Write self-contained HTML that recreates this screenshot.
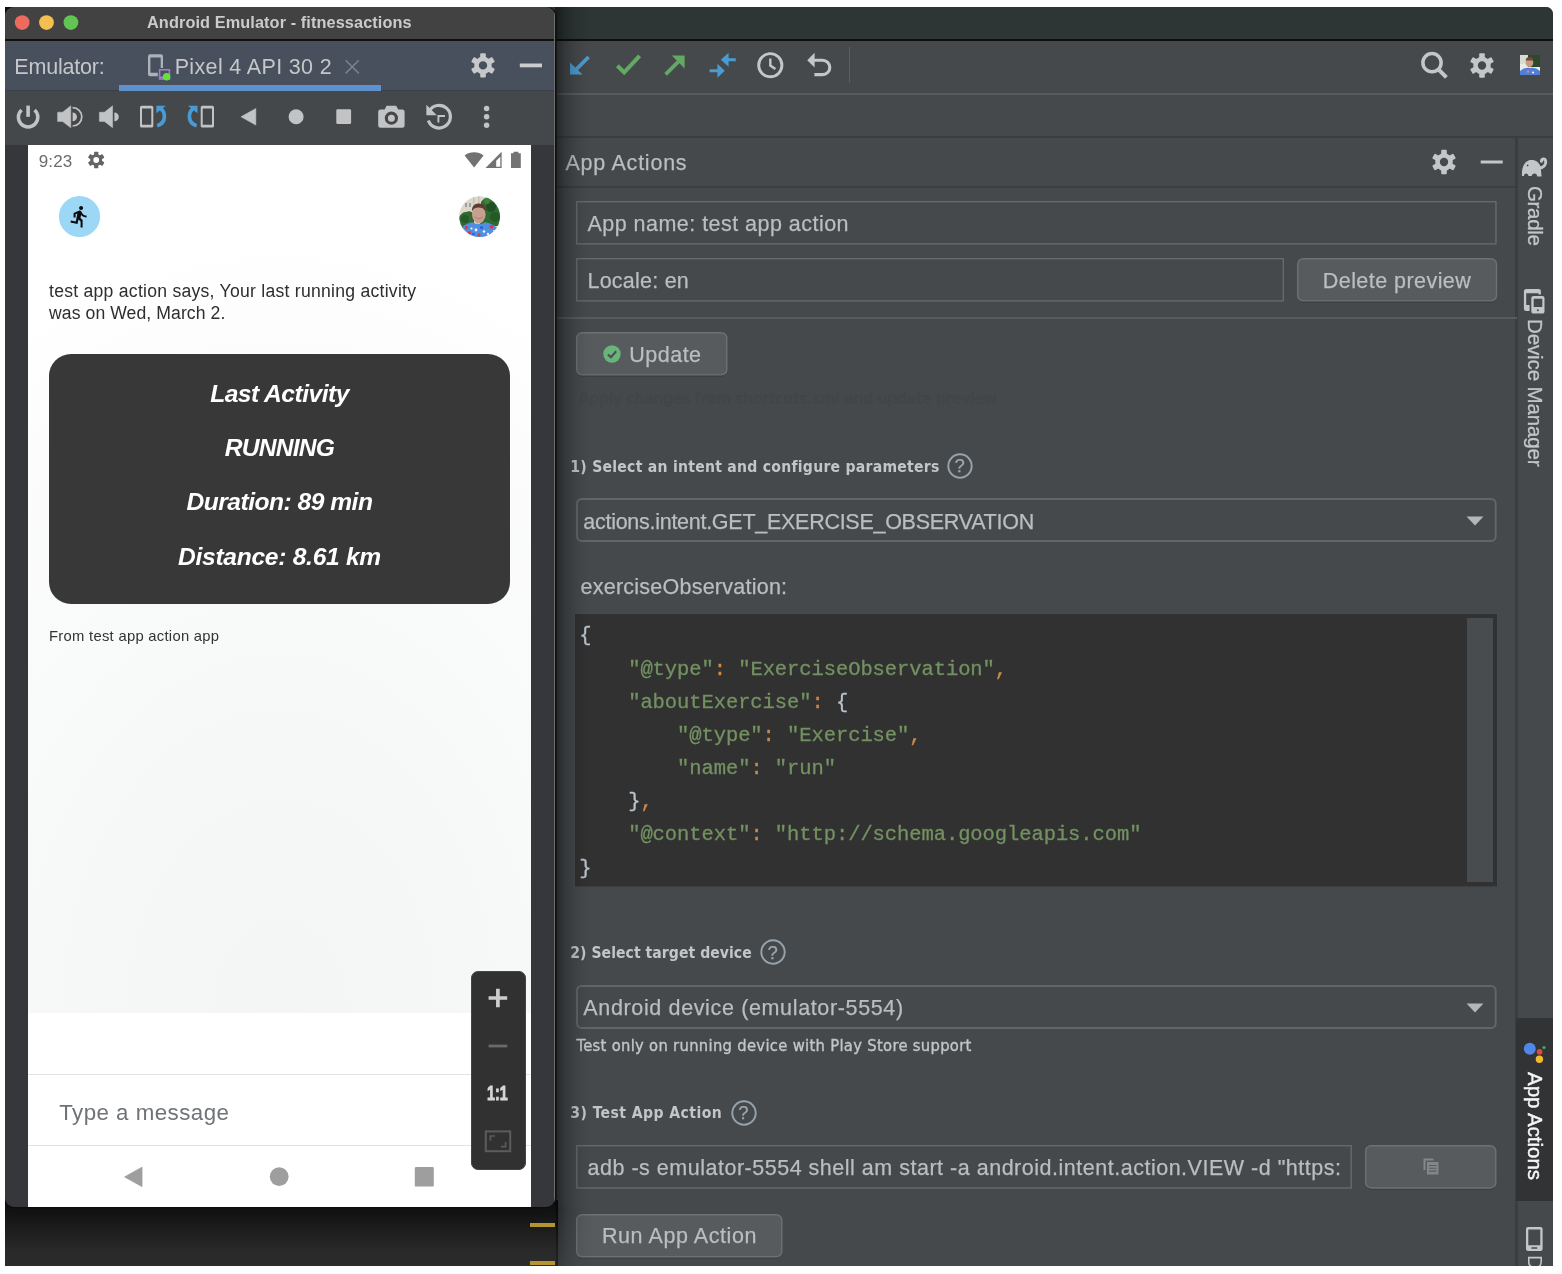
<!DOCTYPE html>
<html lang="en"><head><meta charset="utf-8"><title>App Actions</title><style>
html,body{margin:0;padding:0;background:#fff;}
body{width:1562px;height:1274px;position:relative;overflow:hidden;font-family:"Liberation Sans",sans-serif;}
.a{position:absolute;box-sizing:border-box;}
.t{position:absolute;white-space:pre;line-height:1;}
svg{overflow:visible;}
</style></head><body>
<div class="a" id="root" style="left:0;top:0;width:1562px;height:1274px;clip-path:inset(6.7px 9px 8.4px 5px);will-change:transform;">
<div class="a" style="left:5px;top:7px;width:1548px;height:1259px;background:#45494b;border-radius:0 7px 0 0;overflow:hidden;"></div>
<div class="a" style="left:5px;top:7px;width:1548px;height:33px;background:#2d3535;border-radius:0 7px 0 0;"></div>
<div class="a" style="left:5px;top:7px;width:20px;height:20px;background:#0c0c0c;"></div>
<div class="a" style="left:5px;top:39px;width:1548px;height:2px;background:#0d0e0e;"></div>
<div class="a" style="left:556px;top:93px;width:997px;height:2px;background:#595c5e;"></div>
<div class="a" style="left:556px;top:136px;width:997px;height:2px;background:#3a3d3f;"></div>
<div class="a" style="left:556px;top:186px;width:961px;height:2px;background:#3b3e40;"></div>
<div class="a" style="left:1515.4px;top:138px;width:2.4px;height:1128px;background:#3b3e40;"></div>
<div class="a" style="left:1515.6px;top:1017.8px;width:37.6px;height:183.2px;background:#313335;"></div>
<div class="a" style="left:5px;top:1200px;width:552.6px;height:66px;background:linear-gradient(#0e0e0e 0px,#101010 8px,#1d1d1d 30px,#2a2a2a 52px,#2b2b2b 66px);"></div>
<div class="a" style="left:529.6px;top:1223.1px;width:25.8px;height:3.9px;background:#b6942f;"></div>
<div class="a" style="left:529.6px;top:1261.2px;width:25.8px;height:3.9px;background:#b6942f;"></div>
<svg class="a" style="left:0px;top:0px;" width="1562" height="140" viewBox="0 0 1562 140"><path d="M588.6,57L574,71.6" stroke="#4a9bd0" stroke-width="3.7" fill="none"/><path d="M570,62.4V74.6H582.6Z" fill="#4a9bd0"/><path d="M617.4,65.8L624.2,72.4L639.6,55.8" fill="none" stroke="#62a964" stroke-width="4.1"/><path d="M665.6,74.4L680.4,59.6" stroke="#62a964" stroke-width="3.7" fill="none"/><path d="M671.8,55.6H684.6V68.4Z" fill="#62a964"/><path d="M720.8,59.8L728.6,52.8V58.3H735.8V61.3H728.6V66.8Z" fill="#4a9bd0"/><path d="M724.8,70.8L717.4,63.8V69.3H709.6V72.3H717.4V77.8Z" fill="#4a9bd0"/><circle cx="770.3" cy="65.2" r="11.6" fill="none" stroke="#c4c6c8" stroke-width="2.9"/><path d="M770.3,58.6V65.6L775.4,69" fill="none" stroke="#c4c6c8" stroke-width="2.4"/><path d="M807.2,60.2L814.6,52.8V67.6Z" fill="#c4c6c8"/><path d="M814,60.2H822.6a7.2,7.2 0 0 1 0,14.4H814.4" fill="none" stroke="#c4c6c8" stroke-width="3.1"/><rect x="849" y="47" width="1" height="36" fill="#5b5e60"/><circle cx="1432" cy="62.700" r="9.1" fill="none" stroke="#c4c6c8" stroke-width="3.5"/><path d="M1438.400,69.400L1446.400,77.400" stroke="#c4c6c8" stroke-width="4" fill="none"/><g transform="translate(1482,65.5) rotate(0)" fill="#c4c6c8"><path fill-rule="evenodd" d="M8.783999999999999,0A8.783999999999999,8.783999999999999 0 1 0 -8.783999999999999,0A8.783999999999999,8.783999999999999 0 1 0 8.783999999999999,0Z M4.2,0A4.2,4.2 0 1 1 -4.2,0A4.2,4.2 0 1 1 4.2,0Z"/><rect x="-2.81" y="-12.20" width="5.61" height="5.49" rx="0.98" transform="rotate(0.0)"/><rect x="-2.81" y="-12.20" width="5.61" height="5.49" rx="0.98" transform="rotate(60.0)"/><rect x="-2.81" y="-12.20" width="5.61" height="5.49" rx="0.98" transform="rotate(120.0)"/><rect x="-2.81" y="-12.20" width="5.61" height="5.49" rx="0.98" transform="rotate(180.0)"/><rect x="-2.81" y="-12.20" width="5.61" height="5.49" rx="0.98" transform="rotate(240.0)"/><rect x="-2.81" y="-12.20" width="5.61" height="5.49" rx="0.98" transform="rotate(300.0)"/></g></svg>
<svg class="a" style="left:1520px;top:55.3px;" width="20" height="20" viewBox="0 0 20 20"><rect x="0" y="0" width="20" height="20" fill="#e9ece6"/><rect x="8" y="0" width="12" height="12" fill="#2c4a2a"/><rect x="0" y="0" width="8" height="9" fill="#d9dcd3"/><ellipse cx="9.5" cy="7.5" rx="3.8" ry="4.6" fill="#c99a84"/><path d="M5.7,5.5a3.8,3.6 0 0 1 7.6,0z" fill="#6d4a3a"/><path d="M0,20V16Q5,11.5 10,13Q15,11.5 20,16V20Z" fill="#4f7fd6"/><circle cx="8" cy="16.5" r="1.3" fill="#e07a8a"/><circle cx="13" cy="17.5" r="1.1" fill="#f2f2f8"/></svg>
<div class="t" style="left:565.40px;top:153px;font:normal 400 21.5px/1 'Liberation Sans',sans-serif;color:#bbbdbf;letter-spacing:0.768px;-webkit-text-stroke:0.25px #bbbdbf;">App Actions</div>
<svg class="a" style="left:0px;top:0px;" width="1562" height="200" viewBox="0 0 1562 200"><g transform="translate(1444,162) rotate(0)" fill="#c4c6c8"><path fill-rule="evenodd" d="M8.783999999999999,0A8.783999999999999,8.783999999999999 0 1 0 -8.783999999999999,0A8.783999999999999,8.783999999999999 0 1 0 8.783999999999999,0Z M4.2,0A4.2,4.2 0 1 1 -4.2,0A4.2,4.2 0 1 1 4.2,0Z"/><rect x="-2.81" y="-12.20" width="5.61" height="5.49" rx="0.98" transform="rotate(0.0)"/><rect x="-2.81" y="-12.20" width="5.61" height="5.49" rx="0.98" transform="rotate(60.0)"/><rect x="-2.81" y="-12.20" width="5.61" height="5.49" rx="0.98" transform="rotate(120.0)"/><rect x="-2.81" y="-12.20" width="5.61" height="5.49" rx="0.98" transform="rotate(180.0)"/><rect x="-2.81" y="-12.20" width="5.61" height="5.49" rx="0.98" transform="rotate(240.0)"/><rect x="-2.81" y="-12.20" width="5.61" height="5.49" rx="0.98" transform="rotate(300.0)"/></g><rect x="1480.7" y="160.5" width="22" height="3" fill="#c4c6c8"/></svg>
<svg class="a" style="left:576px;top:201px;" width="920.7" height="46.6" viewBox="0 0 920.7 46.6"><rect x="0.7" y="0.7" width="919.3000000000001" height="42.2" rx="0" fill="none" stroke="#666a6c" stroke-width="1.4"/></svg>
<div class="t" style="left:587.50px;top:214px;font:normal 400 21.5px/1 'Liberation Sans',sans-serif;color:#bbbdbf;letter-spacing:0.468px;-webkit-text-stroke:0.25px #bbbdbf;">App name: test app action</div>
<svg class="a" style="left:576px;top:257.5px;" width="708" height="46.6" viewBox="0 0 708 46.6"><rect x="0.7" y="0.7" width="706.6" height="42.2" rx="0" fill="none" stroke="#666a6c" stroke-width="1.4"/></svg>
<div class="t" style="left:587.50px;top:271px;font:normal 400 21.5px/1 'Liberation Sans',sans-serif;color:#bbbdbf;letter-spacing:0.228px;-webkit-text-stroke:0.25px #bbbdbf;">Locale: en</div>
<svg class="a" style="left:1296.5px;top:257.5px;" width="200.2" height="46.6" viewBox="0 0 200.2 46.6"><rect x="1.2" y="2.5" width="197.79999999999998" height="42.2" rx="5.5" fill="rgba(0,0,0,0.16)"/><rect x="0.7" y="0.7" width="198.79999999999998" height="42.2" rx="5.5" fill="#575b5d" stroke="#6d7173" stroke-width="1.4"/></svg>
<div class="t" style="left:1322.75px;top:271px;font:normal 400 21.5px/1 'Liberation Sans',sans-serif;color:#bbbdbf;letter-spacing:0.449px;-webkit-text-stroke:0.25px #bbbdbf;">Delete preview</div>
<div class="a" style="left:556px;top:316.5px;width:961px;height:2px;background:#585b5d;"></div>
<svg class="a" style="left:576px;top:332px;" width="151.5" height="46.6" viewBox="0 0 151.5 46.6"><rect x="1.2" y="2.5" width="149.1" height="42.2" rx="5.5" fill="rgba(0,0,0,0.16)"/><rect x="0.7" y="0.7" width="150.1" height="42.2" rx="5.5" fill="#575b5d" stroke="#6d7173" stroke-width="1.4"/></svg>
<svg class="a" style="left:602.7px;top:345.2px;" width="18" height="18" viewBox="0 0 18 18"><circle cx="9" cy="9" r="8.7" fill="#68b579"/><path d="M4.9,9.4L7.9,12.2L13.2,6.3" fill="none" stroke="#4b4f51" stroke-width="2.1"/></svg>
<div class="t" style="left:629.20px;top:345px;font:normal 400 21.5px/1 'Liberation Sans',sans-serif;color:#bbbdbf;letter-spacing:0.512px;-webkit-text-stroke:0.25px #bbbdbf;">Update</div>
<div class="t" style="left:578.50px;top:391px;font:normal 700 16px/1 'DejaVu Sans Condensed','DejaVu Sans',sans-serif;color:#424648;letter-spacing:-0.537px;">Apply changes from shortcuts.xml and update preview</div>
<div class="t" style="left:570.30px;top:460px;font:normal 700 15.6px/1 'DejaVu Sans Condensed','DejaVu Sans',sans-serif;color:#c3c5c7;letter-spacing:0.259px;">1) Select an intent and configure parameters</div>
<svg class="a" style="left:946.7px;top:452.5px;" width="26" height="26" viewBox="0 0 26 26"><circle cx="13" cy="13" r="11.7" fill="none" stroke="#98a2ab" stroke-width="1.9"/></svg>
<div class="t" style="left:954.56px;top:457px;font:normal 400 18.5px/1 'Liberation Sans',sans-serif;color:#9ea8b0;-webkit-text-stroke:0.25px #9ea8b0;">?</div>
<svg class="a" style="left:576px;top:498px;" width="920.7" height="46.9" viewBox="0 0 920.7 46.9"><rect x="0.95" y="0.95" width="918.8000000000001" height="42.0" rx="4.5" fill="none" stroke="#62666a" stroke-width="1.9"/></svg>
<div class="t" style="left:583.30px;top:512px;font:normal 400 21.5px/1 'Liberation Sans',sans-serif;color:#bbbdbf;letter-spacing:-0.273px;-webkit-text-stroke:0.25px #bbbdbf;">actions.intent.GET_EXERCISE_OBSERVATION</div>
<svg class="a" style="left:1465.7px;top:515.95px;" width="18" height="10" viewBox="0 0 18 10"><path d="M0.5,0.5H17.5L9,9.5Z" fill="#b4b6b8"/></svg>
<div class="t" style="left:580.50px;top:577px;font:normal 400 21.5px/1 'Liberation Sans',sans-serif;color:#bbbdbf;letter-spacing:0.242px;-webkit-text-stroke:0.25px #bbbdbf;">exerciseObservation:</div>
<div class="a" style="left:574.6px;top:612.5px;width:923.8px;height:274.8px;background:#313131;border:1px solid #484a4b;border-left:none;border-bottom-color:#3c3e3f;"></div>
<div class="a" style="left:1467.2px;top:618px;width:26px;height:263.5px;background:#484c4e;"></div>
<div class="t" style="left:579.30px;top:626px;font:normal 400 20.5px/1 'Liberation Mono',monospace;color:#b9c3cd;-webkit-text-stroke:0.3px;"><span style="color:#b9c3cd">{</span></div>
<div class="t" style="left:628.18px;top:660px;font:normal 400 20.5px/1 'Liberation Mono',monospace;color:#b9c3cd;letter-spacing:-0.082px;-webkit-text-stroke:0.3px;"><span style="color:#739161">&quot;@type&quot;</span><span style="color:#cc8a4a">:</span> <span style="color:#739161">&quot;ExerciseObservation&quot;</span><span style="color:#cc8a4a">,</span></div>
<div class="t" style="left:628.18px;top:693px;font:normal 400 20.5px/1 'Liberation Mono',monospace;color:#b9c3cd;letter-spacing:-0.082px;-webkit-text-stroke:0.3px;"><span style="color:#739161">&quot;aboutExercise&quot;</span><span style="color:#cc8a4a">:</span> <span style="color:#b9c3cd">{</span></div>
<div class="t" style="left:677.06px;top:726px;font:normal 400 20.5px/1 'Liberation Mono',monospace;color:#b9c3cd;letter-spacing:-0.082px;-webkit-text-stroke:0.3px;"><span style="color:#739161">&quot;@type&quot;</span><span style="color:#cc8a4a">:</span> <span style="color:#739161">&quot;Exercise&quot;</span><span style="color:#cc8a4a">,</span></div>
<div class="t" style="left:677.06px;top:759px;font:normal 400 20.5px/1 'Liberation Mono',monospace;color:#b9c3cd;letter-spacing:-0.082px;-webkit-text-stroke:0.3px;"><span style="color:#739161">&quot;name&quot;</span><span style="color:#cc8a4a">:</span> <span style="color:#739161">&quot;run&quot;</span></div>
<div class="t" style="left:628.18px;top:792px;font:normal 400 20.5px/1 'Liberation Mono',monospace;color:#b9c3cd;letter-spacing:-0.082px;-webkit-text-stroke:0.3px;"><span style="color:#b9c3cd">}</span><span style="color:#cc8a4a">,</span></div>
<div class="t" style="left:628.18px;top:825px;font:normal 400 20.5px/1 'Liberation Mono',monospace;color:#b9c3cd;letter-spacing:-0.082px;-webkit-text-stroke:0.3px;"><span style="color:#739161">&quot;@context&quot;</span><span style="color:#cc8a4a">:</span> <span style="color:#739161">&quot;http://schema.googleapis.com&quot;</span></div>
<div class="t" style="left:579.30px;top:859px;font:normal 400 20.5px/1 'Liberation Mono',monospace;color:#b9c3cd;-webkit-text-stroke:0.3px;"><span style="color:#b9c3cd">}</span></div>
<div class="t" style="left:570.30px;top:946px;font:normal 700 15.6px/1 'DejaVu Sans Condensed','DejaVu Sans',sans-serif;color:#c3c5c7;letter-spacing:0.041px;">2) Select target device</div>
<svg class="a" style="left:759.6px;top:939.3px;" width="26" height="26" viewBox="0 0 26 26"><circle cx="13" cy="13" r="11.7" fill="none" stroke="#98a2ab" stroke-width="1.9"/></svg>
<div class="t" style="left:767.46px;top:944px;font:normal 400 18.5px/1 'Liberation Sans',sans-serif;color:#9ea8b0;-webkit-text-stroke:0.25px #9ea8b0;">?</div>
<svg class="a" style="left:576px;top:985px;" width="920.7" height="46.9" viewBox="0 0 920.7 46.9"><rect x="0.95" y="0.95" width="918.8000000000001" height="42.0" rx="4.5" fill="none" stroke="#62666a" stroke-width="1.9"/></svg>
<div class="t" style="left:583.30px;top:998px;font:normal 400 21.5px/1 'Liberation Sans',sans-serif;color:#bbbdbf;letter-spacing:0.644px;-webkit-text-stroke:0.25px #bbbdbf;">Android device (emulator-5554)</div>
<svg class="a" style="left:1465.7px;top:1002.95px;" width="18" height="10" viewBox="0 0 18 10"><path d="M0.5,0.5H17.5L9,9.5Z" fill="#b4b6b8"/></svg>
<div class="t" style="left:576.60px;top:1038px;font:normal 400 16.4px/1 'DejaVu Sans Condensed','DejaVu Sans',sans-serif;color:#c3c5c7;letter-spacing:0.321px;-webkit-text-stroke:0.35px #c3c5c7;">Test only on running device with Play Store support</div>
<div class="t" style="left:570.30px;top:1106px;font:normal 700 15.6px/1 'DejaVu Sans Condensed','DejaVu Sans',sans-serif;color:#c3c5c7;letter-spacing:0.433px;">3) Test App Action</div>
<svg class="a" style="left:730.5px;top:1099.5px;" width="26" height="26" viewBox="0 0 26 26"><circle cx="13" cy="13" r="11.7" fill="none" stroke="#98a2ab" stroke-width="1.9"/></svg>
<div class="t" style="left:738.36px;top:1104px;font:normal 400 18.5px/1 'Liberation Sans',sans-serif;color:#9ea8b0;-webkit-text-stroke:0.25px #9ea8b0;">?</div>
<svg class="a" style="left:576px;top:1145.4px;" width="776" height="46.7" viewBox="0 0 776 46.7"><rect x="0.7" y="0.7" width="774.6" height="42.300000000000004" rx="0" fill="none" stroke="#666a6c" stroke-width="1.4"/></svg>
<div class="t" style="left:587.50px;top:1158px;font:normal 400 21.5px/1 'Liberation Sans',sans-serif;color:#bbbdbf;letter-spacing:0.512px;-webkit-text-stroke:0.25px #bbbdbf;">adb -s emulator-5554 shell am start -a android.intent.action.VIEW -d &quot;https:</div>
<svg class="a" style="left:1365px;top:1145.4px;" width="131.5" height="46.7" viewBox="0 0 131.5 46.7"><rect x="1.2" y="2.5" width="129.1" height="42.300000000000004" rx="5.5" fill="rgba(0,0,0,0.16)"/><rect x="0.7" y="0.7" width="130.1" height="42.300000000000004" rx="5.5" fill="#575b5d" stroke="#6d7173" stroke-width="1.4"/></svg>
<svg class="a" style="left:1423px;top:1158px;" width="15.4" height="17" viewBox="0 0 15.4 17"><path d="M0.5,0.5H10.5V2.5H2.5V12H0.5Z" fill="#84878a"/><rect x="4" y="4" width="11.5" height="12.5" fill="#84878a"/><path d="M6,7.5H13.5M6,10.3H13.5M6,13.1H13.5" stroke="#585c5e" stroke-width="1.1"/></svg>
<svg class="a" style="left:576px;top:1214px;" width="206.5" height="46.5" viewBox="0 0 206.5 46.5"><rect x="1.2" y="2.5" width="204.1" height="42.1" rx="5.5" fill="rgba(0,0,0,0.16)"/><rect x="0.7" y="0.7" width="205.1" height="42.1" rx="5.5" fill="#575b5d" stroke="#6d7173" stroke-width="1.4"/></svg>
<div class="t" style="left:602.00px;top:1226px;font:normal 400 21.5px/1 'Liberation Sans',sans-serif;color:#bbbdbf;letter-spacing:0.569px;-webkit-text-stroke:0.25px #bbbdbf;">Run App Action</div>
<div class="t" style="left:1534.5px;top:186px;transform-origin:0 0;transform:rotate(90deg) translate(0,-50%);font:normal 400 20.5px/1 'Liberation Sans',sans-serif;color:#c3c5c7;letter-spacing:-0.339px;-webkit-text-stroke:0.3px #c3c5c7;">Gradle</div>
<div class="t" style="left:1534.5px;top:319px;transform-origin:0 0;transform:rotate(90deg) translate(0,-50%);font:normal 400 20.5px/1 'Liberation Sans',sans-serif;color:#c3c5c7;letter-spacing:-0.126px;-webkit-text-stroke:0.3px #c3c5c7;">Device Manager</div>
<div class="t" style="left:1534.5px;top:1255.4px;transform-origin:0 0;transform:rotate(90deg) translate(0,-50%);font:normal 400 20.5px/1 'Liberation Sans',sans-serif;color:#c3c5c7;letter-spacing:-0.005px;">D</div>
<div class="t" style="left:1535.3px;top:1071.5px;transform-origin:0 0;transform:rotate(90deg) translate(0,-50%);font:normal 400 20.5px/1 'Liberation Sans',sans-serif;color:#f4f5f6;letter-spacing:-0.024px;-webkit-text-stroke:0.45px #f4f5f6;">App Actions</div>
<svg class="a" style="left:0px;top:0px;pointer-events:none;" width="1562" height="1274" viewBox="0 0 1562 1274"><path d="M1522,175.9C1521.4,166 1525.4,160 1531.6,160C1536,160 1539.2,162.6 1540.6,166.600L1541.6,176.400L1537.200,176.400C1537.200,174.600 1536,173.500 1534.500,173.500C1533,173.500 1531.900,174.600 1531.700,176.100L1528.500,176.100C1528.300,174.600 1527.400,173.600 1526.100,173.600C1524.800,173.600 1524,174.600 1523.900,175.900Z" fill="#c4c6c8"/><path d="M1538,168.200C1543.800,168.400 1546.200,164.600 1545.700,161.300C1545.200,158.200 1541.600,158.400 1541.400,161.400" fill="none" stroke="#c4c6c8" stroke-width="2.9" stroke-linecap="round"/><circle cx="1527.6" cy="165.4" r="0.9" fill="#45494b"/><path d="M1529.600,311H1526.400a2.500,2.500 0 0 1 -2.500,-2.500V291.500a2.500,2.500 0 0 1 2.500,-2.500H1538.400a2.500,2.500 0 0 1 2.500,2.500V294.600H1538.600V293.300H1526.200V305H1529.600Z" fill="#c4c6c8"/><path fill-rule="evenodd" d="M1533.500,296.100H1542.300a2.200,2.200 0 0 1 2.200,2.200V311.400a2.200,2.200 0 0 1 -2.200,2.200H1533.500a2.200,2.200 0 0 1 -2.200,-2.200V298.300a2.200,2.200 0 0 1 2.200,-2.200Z M1533.700,298.800V307.100H1542.300V298.800Z" fill="#c4c6c8"/><circle cx="1537.9" cy="310.3" r="1" fill="#45494b"/><circle cx="1529.8" cy="1048.8" r="6" fill="#4f87e8"/><circle cx="1539.6" cy="1051.8" r="2.9" fill="#e0483c"/><circle cx="1539.4" cy="1059.2" r="3.7" fill="#f2bb2e"/><circle cx="1544" cy="1047.6" r="1.7" fill="#3ea655"/><path fill-rule="evenodd" d="M1528,1227H1540.600a2,2 0 0 1 2,2V1248.900a2,2 0 0 1 -2,2H1528a2,2 0 0 1 -2,-2V1229a2,2 0 0 1 2,-2Z M1528.300,1229.600V1245.300H1540.300V1229.600Z M1531.400,1247.300V1248.700H1537.200V1247.300Z" fill="#c4c6c8"/></svg>
<div class="a" style="left:555px;top:7px;width:36px;height:1200px;background:linear-gradient(to right,rgba(0,0,0,0.5) 0px,rgba(0,0,0,0.42) 3px,rgba(0,0,0,0.24) 10px,rgba(0,0,0,0.1) 20px,rgba(0,0,0,0.03) 29px,rgba(0,0,0,0) 36px);"></div>
<div class="a" style="left:555.6px;top:1207px;width:36px;height:59px;background:linear-gradient(to right,rgba(0,0,0,0.5) 0px,rgba(0,0,0,0.42) 3px,rgba(0,0,0,0.24) 10px,rgba(0,0,0,0.1) 20px,rgba(0,0,0,0.03) 29px,rgba(0,0,0,0) 36px);-webkit-mask-image:linear-gradient(to bottom,rgba(0,0,0,1),rgba(0,0,0,0.45));mask-image:linear-gradient(to bottom,rgba(0,0,0,1),rgba(0,0,0,0.45));"></div>
<div class="a" style="left:5px;top:7px;width:550.3px;height:1200.3px;background:#36373a;border-radius:9px;box-shadow:1.7px 0 0 0 #111,0 1.2px 0 0 #0c0c0c;overflow:hidden;"><div class="a" style="left:0px;top:0px;width:551px;height:33px;background:#424242;"></div>
<div class="a" style="left:0px;top:32.3px;width:551px;height:1.6px;background:#111;"></div>
<div class="a" style="left:0px;top:33.8px;width:551px;height:49.1px;background:#47505c;"></div>
<div class="a" style="left:0px;top:82.9px;width:551px;height:1.3px;background:#3a3f45;"></div>
<div class="a" style="left:113.5px;top:77.9px;width:262px;height:6.1px;background:#5f92cd;"></div>
<div class="a" style="left:0px;top:84.1px;width:551px;height:53.5px;background:#45484a;"></div>
<div class="a" style="left:549.3px;top:6px;width:1px;height:1190px;background:#6c6e70;"></div>
</div>
<svg class="a" style="left:0px;top:0px;" width="100" height="40" viewBox="0 0 100 40"><circle cx="22.2" cy="22.6" r="7.4" fill="#ee6a5f"/><circle cx="46.5" cy="22.6" r="7.4" fill="#f5bf4f"/><circle cx="70.9" cy="22.6" r="7.4" fill="#61c554"/></svg>
<div class="t" style="left:147.00px;top:14px;font:normal 700 16.3px/1 'Liberation Sans',sans-serif;color:#cbcbcb;letter-spacing:0.099px;">Android Emulator - fitnessactions</div>
<div class="t" style="left:14.30px;top:57px;font:normal 400 21.5px/1 'Liberation Sans',sans-serif;color:#c5c7c9;letter-spacing:-0.201px;">Emulator:</div>
<div class="t" style="left:174.70px;top:57px;font:normal 400 21.5px/1 'Liberation Sans',sans-serif;color:#c5c7c9;letter-spacing:0.344px;">Pixel 4 API 30 2</div>
<svg class="a" style="left:0px;top:0px;" width="560" height="140" viewBox="0 0 560 140"><path fill-rule="evenodd" d="M150,54.200H161a2,2 0 0 1 2,2V74.300a2,2 0 0 1 -2,2H150a2,2 0 0 1 -2,-2V56.200a2,2 0 0 1 2,-2Z M150.400,57.400V72.800H160.700V57.400Z" fill="#aab2ba"/><rect x="157.800" y="68" width="13.400" height="12.600" fill="#47505c"/><rect x="159.600" y="69.800" width="9.800" height="9.200" fill="none" stroke="#a07cc2" stroke-width="1.600"/><rect x="160" y="76.400" width="9" height="2.400" fill="#a07cc2"/><circle cx="166.600" cy="76.800" r="3.800" fill="#62e336"/><path d="M345.6,60.2L358.8,73.4M358.8,60.2L345.6,73.4" stroke="#78848f" stroke-width="1.5" fill="none"/><g transform="translate(483,65.4) rotate(0)" fill="#c6c8ca"><path fill-rule="evenodd" d="M8.783999999999999,0A8.783999999999999,8.783999999999999 0 1 0 -8.783999999999999,0A8.783999999999999,8.783999999999999 0 1 0 8.783999999999999,0Z M4.2,0A4.2,4.2 0 1 1 -4.2,0A4.2,4.2 0 1 1 4.2,0Z"/><rect x="-2.81" y="-12.20" width="5.61" height="5.49" rx="0.98" transform="rotate(0.0)"/><rect x="-2.81" y="-12.20" width="5.61" height="5.49" rx="0.98" transform="rotate(60.0)"/><rect x="-2.81" y="-12.20" width="5.61" height="5.49" rx="0.98" transform="rotate(120.0)"/><rect x="-2.81" y="-12.20" width="5.61" height="5.49" rx="0.98" transform="rotate(180.0)"/><rect x="-2.81" y="-12.20" width="5.61" height="5.49" rx="0.98" transform="rotate(240.0)"/><rect x="-2.81" y="-12.20" width="5.61" height="5.49" rx="0.98" transform="rotate(300.0)"/></g><rect x="519.8" y="63.500" width="22.2" height="3.800" fill="#cbcdce"/><path d="M21.6,110A9.7,9.7 0 1 0 34.6,110" fill="none" stroke="#c2c3c4" stroke-width="3.5"/><rect x="26.3" y="105.6" width="3.6" height="11.2" fill="#c2c3c4"/><path d="M57.6,112.2H62.6L70.8,105.8V127.8L62.6,121.39999999999999H57.6Z" fill="#c2c3c4" stroke="#c2c3c4" stroke-width="0.5" stroke-linejoin="round"/><path d="M72.6,112.39999999999999a4.4,4.4 0 0 1 0,8.800Z" fill="#c2c3c4"/><path d="M72.6,107.6A9.2,9.2 0 0 1 72.6,126.0" fill="none" stroke="#c2c3c4" stroke-width="1.7"/><path d="M99.4,112.2H104.4L112.60000000000001,105.8V127.8L104.4,121.39999999999999H99.4Z" fill="#c2c3c4" stroke="#c2c3c4" stroke-width="0.5" stroke-linejoin="round"/><path d="M114.400,112.39999999999999a4.400,4.400 0 0 1 0,8.800Z" fill="#c2c3c4"/><path fill-rule="evenodd" d="M141.6,105.800H151.7a1.600,1.600 0 0 1 1.600,1.600V125.900a1.600,1.600 0 0 1 -1.600,1.600H141.6a1.600,1.600 0 0 1 -1.600,-1.600V107.400a1.600,1.600 0 0 1 1.600,-1.600Z M142,108.600V124.700H151.3V108.600Z" fill="#c2c3c4"/><path d="M156.300,105.700H165.900L156.300,113.200Z" fill="#4a9ad6"/><path d="M159.600,108.300C165.800,111 167,122.800 157.200,125.700" fill="none" stroke="#4a9ad6" stroke-width="3.700"/><g transform="translate(353.8,0) scale(-1,1)"><path d="M156.300,105.700H165.900L156.300,113.200Z" fill="#4a9ad6"/><path d="M159.600,108.300C165.800,111 167,122.800 157.200,125.700" fill="none" stroke="#4a9ad6" stroke-width="3.700"/></g><path fill-rule="evenodd" d="M202.29999999999998,105.800H212.39999999999998a1.600,1.600 0 0 1 1.600,1.600V125.900a1.600,1.600 0 0 1 -1.600,1.600H202.29999999999998a1.600,1.600 0 0 1 -1.600,-1.600V107.400a1.600,1.600 0 0 1 1.600,-1.600Z M202.7,108.600V124.700H212.0V108.600Z" fill="#c2c3c4"/><path d="M255.8,108.6V125L241,116.8Z" fill="#c2c3c4" stroke="#c2c3c4" stroke-width="0.6" stroke-linejoin="round"/><circle cx="296.1" cy="116.8" r="7.5" fill="#c2c3c4"/><rect x="336.300" y="109.300" width="14.800" height="14.800" rx="1.300" fill="#c2c3c4"/><path fill-rule="evenodd" d="M380.6,109.4H384.6L386.6,105.8H396.2L398.2,109.4H402.2A2.4,2.4 0 0 1 404.6,111.8V125.4A2.4,2.4 0 0 1 402.2,127.8H380.6A2.4,2.4 0 0 1 378.2,125.4V111.8A2.4,2.4 0 0 1 380.6,109.4Z M391.4,111.6A6.6,6.6 0 1 0 391.4,124.8A6.6,6.6 0 1 0 391.4,111.6Z M391.4,114.7A3.5,3.5 0 1 1 391.4,121.7A3.5,3.5 0 1 1 391.4,114.7Z" fill="#c2c3c4"/><path d="M429.200,111.200A11.300,11.300 0 1 1 428.400,120.400" fill="none" stroke="#c2c3c4" stroke-width="3.2"/><path d="M426.400,104.800V115.200H436.800Z" fill="#c2c3c4"/><path d="M438.400,122.600V116H445" fill="none" stroke="#c2c3c4" stroke-width="1.900"/><circle cx="486.6" cy="108.4" r="2.75" fill="#c2c3c4"/><circle cx="486.6" cy="116.8" r="2.75" fill="#c2c3c4"/><circle cx="486.6" cy="125.2" r="2.75" fill="#c2c3c4"/></svg>
<div class="a" style="left:28px;top:144.7px;width:503px;height:1062.6px;background:#fff;overflow:hidden;"><div class="a" style="left:0px;top:0px;width:503px;height:868.3px;background:radial-gradient(ellipse 560px 780px at 50% 100%,#f4f5f5 0%,#f6f7f7 35%,#f9fafa 60%,#fcfcfc 82%,#ffffff 100%);"></div>
<div class="a" style="left:0px;top:929.5px;width:503px;height:1.3px;background:#e2e3e4;"></div>
<div class="a" style="left:0px;top:1000.3px;width:503px;height:1.3px;background:#e2e3e4;"></div>
</div>
<div class="t" style="left:38.80px;top:153px;font:normal 400 17px/1 'Liberation Sans',sans-serif;color:#6c6c6c;letter-spacing:0.103px;">9:23</div>
<svg class="a" style="left:0px;top:0px;" width="560" height="260" viewBox="0 0 560 260"><g transform="translate(96.2,160) rotate(0)" fill="#646464"><path fill-rule="evenodd" d="M5.976,0A5.976,5.976 0 1 0 -5.976,0A5.976,5.976 0 1 0 5.976,0Z M2.9,0A2.9,2.9 0 1 1 -2.9,0A2.9,2.9 0 1 1 2.9,0Z"/><rect x="-2.10" y="-8.30" width="4.20" height="3.74" rx="0.66" transform="rotate(0.0)"/><rect x="-2.10" y="-8.30" width="4.20" height="3.74" rx="0.66" transform="rotate(60.0)"/><rect x="-2.10" y="-8.30" width="4.20" height="3.74" rx="0.66" transform="rotate(120.0)"/><rect x="-2.10" y="-8.30" width="4.20" height="3.74" rx="0.66" transform="rotate(180.0)"/><rect x="-2.10" y="-8.30" width="4.20" height="3.74" rx="0.66" transform="rotate(240.0)"/><rect x="-2.10" y="-8.30" width="4.20" height="3.74" rx="0.66" transform="rotate(300.0)"/></g><path d="M474.100,167.600L464.600,155.400A15.500,15.500 0 0 1 483.600,155.400Z" fill="#727272"/><path d="M501.600,151.800V168H485.500Z" fill="#727272"/><path d="M500.300,156.800V166.700H496.200V160.800Z" fill="#fff"/><path d="M511,153.200H513.500V151.800H518.400V153.200H520.800V168H511Z" fill="#727272"/><circle cx="79.5" cy="216.5" r="20.6" fill="#9dd7f6"/><g transform="translate(67.6,204.6) scale(1.0)"><path d="M13.49 5.48c1.1 0 2-.9 2-2s-.9-2-2-2-2 .9-2 2 .9 2 2 2zm-3.6 13.9l1-4.4 2.1 2v6h2v-7.5l-2.1-2 .6-3c1.3 1.5 3.3 2.5 5.5 2.5v-2c-1.9 0-3.5-1-4.3-2.4l-1-1.6c-.4-.6-1-1-1.7-1-.3 0-.5.1-.8.1l-5.2 2.2v4.7h2v-3.4l1.8-.7-1.6 8.1-4.9-1-.4 2 7 1.4z" fill="#0a0a0a"/></g><defs><clipPath id="avc"><circle cx="479.6" cy="216.6" r="20.4"/></clipPath></defs><g clip-path="url(#avc)"><rect x="458" y="195" width="44" height="44" fill="#dcd7ca"/><rect x="465" y="203" width="2" height="4" fill="#9aa0a6"/><rect x="469" y="203" width="2" height="4" fill="#9aa0a6"/><rect x="473" y="197" width="1.500" height="12" fill="#c9c2b2"/><rect x="478" y="196" width="1.500" height="10" fill="#c9c2b2"/><path d="M481,202C485,196 490,197 492,199C496,199 499,203 500.500,208L501,226H480Z" fill="#2f6a30"/><path d="M458,224C458,216 462,212 466,212C470,210 473,212 474,216L474,228H458Z" fill="#2f6a30"/><circle cx="491" cy="207" r="5" fill="#1f4f22"/><circle cx="495" cy="217" r="5" fill="#235a27"/><circle cx="465" cy="219" r="4" fill="#245a27"/><circle cx="487" cy="201" r="3" fill="#3f8040"/><ellipse cx="478.800" cy="214.400" rx="6.800" ry="8.200" fill="#c8a08f"/><path d="M472,211.500C471.400,205.800 475,203.400 479,203.400C483.500,203.400 486.200,206.400 485.600,211.500C484,208.400 481.600,207.600 478.600,207.600C475.600,207.600 473.400,208.600 472,211.500Z" fill="#5e3d2e"/><path d="M474.500,216.800Q478.800,220.400 483,216.800" fill="none" stroke="#a77565" stroke-width="0.800"/><path d="M458,240V232Q463,223.500 472.600,222.200Q478.800,226 485,222.200Q494.600,223.500 501,232V240Z" fill="#4e8fe2"/><path d="M474.400,221.600Q478.800,225.400 483.200,221.600L483.200,220.600Q478.800,223.600 474.400,220.600Z" fill="#c8a08f"/><circle cx="466.5" cy="227.5" r="1.7" fill="#e0364a"/><circle cx="469.5" cy="232.5" r="1.5" fill="#e0364a"/><circle cx="491.5" cy="226.8" r="2" fill="#e0364a"/><circle cx="479" cy="235" r="1.6" fill="#e0364a"/><circle cx="476" cy="230" r="1.4" fill="#f4f5fb"/><circle cx="484" cy="231.5" r="1.3" fill="#f4f5fb"/><circle cx="471.5" cy="228.5" r="1.1" fill="#f4f5fb"/><circle cx="488" cy="234" r="1.2" fill="#f4f5fb"/><circle cx="481.5" cy="227.5" r="1.5" fill="#2f62c8"/><circle cx="473.5" cy="234" r="1.3" fill="#2f62c8"/><circle cx="494" cy="231" r="1.1" fill="#f4f5fb"/></g></svg>
<div class="t" style="left:49.00px;top:283px;font:normal 400 17.6px/1 'Liberation Sans',sans-serif;color:#2e2e2e;letter-spacing:0.255px;">test app action says, Your last running activity</div>
<div class="t" style="left:49.00px;top:305px;font:normal 400 17.6px/1 'Liberation Sans',sans-serif;color:#2e2e2e;letter-spacing:0.086px;">was on Wed, March 2.</div>
<div class="a" style="left:49px;top:354px;width:461px;height:249.6px;background:#383838;border-radius:22px;"></div>
<div class="t" style="left:210.15px;top:382px;font:italic 700 24.6px/1 'Liberation Sans',sans-serif;color:#fff;letter-spacing:-0.513px;">Last Activity</div>
<div class="t" style="left:224.75px;top:436px;font:italic 700 24.6px/1 'Liberation Sans',sans-serif;color:#fff;letter-spacing:-0.757px;">RUNNING</div>
<div class="t" style="left:186.50px;top:490px;font:italic 700 24.6px/1 'Liberation Sans',sans-serif;color:#fff;letter-spacing:-0.506px;">Duration: 89 min</div>
<div class="t" style="left:178.00px;top:545px;font:italic 700 24.6px/1 'Liberation Sans',sans-serif;color:#fff;letter-spacing:-0.285px;">Distance: 8.61 km</div>
<div class="t" style="left:49.00px;top:629px;font:normal 400 14.8px/1 'Liberation Sans',sans-serif;color:#333;letter-spacing:0.279px;">From test app action app</div>
<div class="t" style="left:59.20px;top:1102px;font:normal 400 22.3px/1 'Liberation Sans',sans-serif;color:#6f7277;letter-spacing:0.477px;">Type a message</div>
<svg class="a" style="left:0px;top:0px;" width="560" height="1274" viewBox="0 0 560 1274"><path d="M142,1167.2V1186.600L124.600,1176.900Z" fill="#9e9e9e" stroke="#9e9e9e" stroke-width="0.8" stroke-linejoin="round"/><circle cx="279.2" cy="1176.6" r="9.4" fill="#9e9e9e"/><rect x="414.8" y="1167" width="19" height="19.6" rx="1.2" fill="#9e9e9e"/></svg>
<div class="a" style="left:471.3px;top:970.5px;width:54.6px;height:199.6px;background:#313131;border:1.5px solid #454545;border-radius:7px;"></div>
<svg class="a" style="left:0px;top:0px;" width="560" height="1274" viewBox="0 0 560 1274"><path d="M488.6,998H507.200M497.900,988.700V1007.300" stroke="#cdcdcd" stroke-width="3.700" fill="none"/><rect x="488.600" y="1044.600" width="18.6" height="2.8" fill="#6a6a6a"/><rect x="485.800" y="1131.400" width="24.400" height="19.8" fill="none" stroke="#5c5c5c" stroke-width="2"/><path d="M490.400,1140.600V1136H495M505.600,1142V1146.600H501" fill="none" stroke="#5c5c5c" stroke-width="1.700"/></svg>
<div class="t" style="left:482.7px;top:1083.6px;width:28.6px;text-align:center;font:normal 700 19.8px/1 'Liberation Sans',sans-serif;color:#d6d6d6;-webkit-text-stroke:0.9px #d6d6d6;transform:scaleX(0.72);transform-origin:50% 50%;">1:1</div>
</div>
</body></html>
